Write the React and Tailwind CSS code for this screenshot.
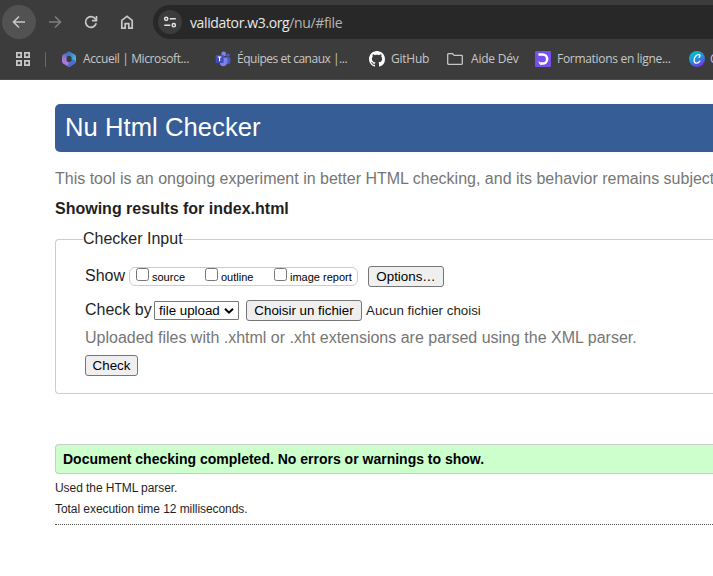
import React from "react";

const BackArrow = ({ className }) => (
  <svg width="16" height="16" viewBox="0 0 16 16" fill="none" stroke="currentColor" strokeWidth="1.6" className={className}>
    <path d="M14 8H3M8 2.5 2.5 8 8 13.5" />
  </svg>
);

const Reload = () => (
  <svg width="16" height="16" viewBox="0 0 16 16" fill="none" stroke="currentColor" strokeWidth="1.7">
    <path d="M13.2 9.3A5.4 5.4 0 1 1 12.3 4.7L13.5 6" />
    <path d="M13.5 2v4.6H9" />
  </svg>
);

const Home = () => (
  <svg width="16" height="16" viewBox="0 0 16 16" fill="none" stroke="currentColor" strokeWidth="1.7">
    <path d="M2.8 6.3 8 2.3l5.2 4v7.8H9.8V9.6H6.2v4.5H2.8z" />
  </svg>
);

const Tune = () => (
  <svg width="14" height="14" viewBox="0 0 14 14" fill="none" stroke="#e3e3e3" strokeWidth="1.5">
    <circle cx="3.2" cy="3.8" r="1.6" />
    <path d="M6.8 3.8h6M1.3 10.2h6" />
    <circle cx="10.8" cy="10.2" r="1.6" />
  </svg>
);

const Apps = () => (
  <svg width="14" height="14" viewBox="0 0 14 14" fill="none" stroke="#c7c7c7" strokeWidth="1.7" className="shrink-0">
    <path d="M.85.85h4.3v4.3H.85zM8.85.85h4.3v4.3h-4.3zM.85 8.85h4.3v4.3H.85zM8.85 8.85h4.3v4.3h-4.3z" />
  </svg>
);

const M365 = () => (
  <svg width="16" height="16" viewBox="0 0 16 16" className="shrink-0">
    <defs>
      <linearGradient id="m1" x1="0" y1="0" x2="0" y2="1">
        <stop offset="0" stopColor="#4a5fb4" />
        <stop offset="1" stopColor="#b884e6" />
      </linearGradient>
      <linearGradient id="m2" x1="0" y1="0" x2="1" y2="1">
        <stop offset="0" stopColor="#3f62b4" />
        <stop offset="1" stopColor="#42c4f0" />
      </linearGradient>
    </defs>
    <path d="M8 .3 2.2 3.4Q1 4 1 5.3v5.4l4.6-2.4V5.5z" fill="url(#m1)" />
    <path d="M8 .3 13.8 3.5Q15 4.2 15 5.4v5.1l-4.4-2.2V6L8 4.6 5.500 6V2z" fill="url(#m2)" />
    <path d="M1 10.600 5.600 8v2.200l2.500 1.400 2.500-1.400 4.400.2q0 1.200-1.100 1.900L9 15.400q-1 .6-2 0L2 12.500Q1 11.800 1 10.600z" fill="#a77bdc" />
    <path d="M10.6 8v2.200l-2.500 1.400-1.900 3.400q1.300.9 2.800.4l4.900-3.100q1.100-.7 1.100-1.900z" fill="#476fd0" />
  </svg>
);

const Teams = () => (
  <svg width="16" height="16" viewBox="0 0 16 16" className="shrink-0">
    <circle cx="13" cy="4.2" r="1.7" fill="#5059c9" />
    <path d="M11 6.5h4.4v4.2a2.4 2.4 0 0 1-4.4 1.2z" fill="#5059c9" />
    <circle cx="8.7" cy="3" r="2.4" fill="#7b83eb" />
    <path d="M5 6.5h7.3v4.6a4 4 0 0 1-7.3 2.3z" fill="#7b83eb" />
    <rect x=".6" y="3.9" width="8" height="8" rx=".7" fill="#454eb8" />
    <path d="M2.8 6h3.6M4.6 6v4.2" stroke="#fff" strokeWidth="1.1" />
  </svg>
);

const Github = () => (
  <svg width="16" height="16" viewBox="0 0 16 16" fill="#fff" className="shrink-0">
    <path d="M8 0C3.58 0 0 3.58 0 8c0 3.54 2.29 6.53 5.47 7.59.4.07.55-.17.55-.38 0-.19-.01-.82-.01-1.49-2.01.37-2.53-.49-2.69-.94-.09-.23-.48-.94-.82-1.13-.28-.15-.68-.52-.01-.53.63-.01 1.08.58 1.23.82.72 1.21 1.87.87 2.33.66.07-.52.28-.87.51-1.07-1.78-.2-3.64-.89-3.64-3.95 0-.87.31-1.59.82-2.15-.08-.2-.36-1.02.08-2.12 0 0 .67-.21 2.2.82.64-.18 1.32-.27 2-.27s1.36.09 2 .27c1.53-1.04 2.2-.82 2.2-.82.44 1.1.16 1.92.08 2.12.51.56.82 1.27.82 2.15 0 3.07-1.87 3.75-3.65 3.95.29.25.54.73.54 1.48 0 1.07-.01 1.93-.01 2.2 0 .21.15.46.55.38A8.01 8.01 0 0 0 16 8c0-4.42-3.58-8-8-8z" />
  </svg>
);

const Folder = () => (
  <svg width="16" height="12" viewBox="0 0 16 12" fill="none" stroke="#c7c7c7" strokeWidth="1.3" className="shrink-0">
    <path d="M.7 10.6V1.3Q.7.7 1.3.7h4.2l1.7 1.7h7.4q.7 0 .7.7v7.5q0 .7-.7.7H1.4q-.7 0-.7-.7z" />
  </svg>
);

const Formations = () => (
  <svg width="16" height="16" viewBox="0 0 16 16" className="shrink-0">
    <rect width="16" height="16" rx="1" fill="#7451eb" />
    <path d="M3.4 3.4h4.2a4.6 4.6 0 0 1 0 9.2H5.2" fill="none" stroke="#fff" strokeWidth="2.5" />
    <path d="M3.5 9.7 7 13.8H5.3Q3.5 13 3.5 9.7z" fill="#fff" />
  </svg>
);

const Canva = () => (
  <svg width="16" height="16" viewBox="0 0 16 16" className="shrink-0">
    <defs>
      <linearGradient id="cv" x1=".2" y1="0" x2=".7" y2="1">
        <stop offset="0" stopColor="#00c4cc" />
        <stop offset=".5" stopColor="#1f92dd" />
        <stop offset="1" stopColor="#7d2ae8" />
      </linearGradient>
    </defs>
    <circle cx="8" cy="8" r="8" fill="url(#cv)" />
    <path d="M10 6.3c1.4-.7 1.5-2.6-.1-2.7C7.4 3.5 5.2 6.3 5.1 9c-.1 3.7 3.5 4.3 5.8 1.1" fill="none" stroke="#fff" strokeWidth="1.3" strokeLinecap="round" />
  </svg>
);

const Bookmark = ({ icon, label, width, textClass }) => (
  <div className={`flex shrink-0 items-center ${width}`}>
    {icon}
    <span className={textClass}>{label}</span>
  </div>
);

const Check = ({ label, className }) => (
  <label className={`flex shrink-0 ${className}`}>
    <span className="h-[13px] w-[13px] shrink-0 rounded-[2.5px] border border-[#767676] bg-white" />
    <span className="ml-[3px] mt-[2px] text-[11px] leading-[14px] text-black">{label}</span>
  </label>
);

const Button = ({ children, className }) => (
  <button className={`flex h-[21px] shrink-0 items-center justify-center rounded-[3px] border border-[#767676] bg-[#efefef] text-[13.333px] leading-none text-black ${className}`}>
    {children}
  </button>
);

export default function App() {
  return (
    <div className="h-[576px] w-[713px] overflow-hidden whitespace-nowrap bg-white font-['Liberation_Sans',Arial,sans-serif] text-[#1f1f1f]">
      <header className="h-[80px] border-b border-[#4a4a4a] bg-[#3c3c3c] font-['Open_Sans',sans-serif] text-[#c7c7c7]">
        <div className="flex h-[44px] items-center pl-[2px]">
          <div className="flex h-[34px] w-[34px] items-center justify-center rounded-full bg-[#525252]">
            <BackArrow />
          </div>
          <div className="ml-[11px] text-[#7e7e7e]"><BackArrow className="rotate-180" /></div>
          <div className="ml-[20px]"><Reload /></div>
          <div className="ml-[20px]"><Home /></div>
          <div className="ml-[18px] flex h-[34px] flex-1 items-center rounded-l-full bg-[#282828] pl-[5px]">
            <div className="flex h-[24px] w-[24px] items-center justify-center rounded-full bg-[#3c3c3c]"><Tune /></div>
            <span className="ml-[8px] text-[14px] tracking-[-0.37px] text-[#e8e8e8]">
              validator.w3.org<span className="text-[#b5b5b5]">/nu/#file</span>
            </span>
          </div>
        </div>
        <nav className="flex h-[30px] items-center pl-[16px] text-[12px]">
          <Apps />
          <div className="ml-[15px] mr-[15px] h-[15px] w-px shrink-0 bg-[#686868]" />
          <Bookmark icon={<M365 />} label="Accueil | Microsoft..." width="w-[154px]" textClass="ml-[6px] tracking-[-0.39px]" />
          <Bookmark icon={<Teams />} label="Équipes et canaux |..." width="w-[154px]" textClass="ml-[6px] tracking-[-0.48px]" />
          <Bookmark icon={<Github />} label="GitHub" width="w-[78px]" textClass="ml-[6px] tracking-[-0.25px]" />
          <Bookmark icon={<Folder />} label="Aide Dév" width="w-[88px]" textClass="ml-[8px] tracking-[-0.2px]" />
          <Bookmark icon={<Formations />} label="Formations en ligne..." width="w-[154px]" textClass="ml-[6px] tracking-[-0.3px]" />
          <Bookmark icon={<Canva />} label="C" width="w-[24px]" textClass="ml-[5px]" />
        </nav>
      </header>

      <main className="pl-[55px] pt-[24px]">
        <h1 className="flex h-[48px] items-center rounded-l-[5px] bg-[#365d95] pb-[2px] pl-[10px] text-[25.6px] tracking-[0.05px] text-white">Nu Html Checker</h1>
        <p className="mt-[17px] h-[20px] text-[16px] leading-[20px] text-[#767676]">This tool is an ongoing experiment in better HTML checking, and its behavior remains subject</p>
        <h2 className="mt-[10px] h-[20px] text-[16px] font-bold leading-[20px]">Showing results for index.html</h2>

        <fieldset className="mt-[10px] h-[165px] rounded-l-[4px] border border-r-0 border-[#ccc] pl-[29px]">
          <legend className="-ml-[2px] h-[20px] pt-px text-[16px] leading-[18px]">Checker Input</legend>
          <div className="mt-[17px] flex h-[21px] items-center">
            <span className="w-[44px] pb-[2px] text-[16px]">Show</span>
            <div className="flex h-[19px] w-[229px] rounded-[6px] border border-[#ccc] pl-[6px]">
              <Check label="source" className="w-[69px]" />
              <Check label="outline" className="w-[69px]" />
              <Check label="image report" className="" />
            </div>
            <Button className="ml-[10px] w-[76px]">Options…</Button>
          </div>
          <div className="mt-[13px] flex h-[21px] items-center">
            <span className="w-[69px] pb-[2px] text-[16px]">Check by</span>
            <div className="flex h-[19px] w-[85px] items-center rounded-[1px] border border-[#767676] pl-[4px] text-[13.333px] text-black">
              file upload
              <svg width="10" height="8" viewBox="0 0 10 8" className="ml-[4px]" fill="none" stroke="#000" strokeWidth="2">
                <path d="M1 1.7 5 5.7 9 1.7" />
              </svg>
            </div>
            <Button className="ml-[7px] w-[116px]">Choisir un fichier</Button>
            <span className="ml-[4px] text-[13.333px]">Aucun fichier choisi</span>
          </div>
          <p className="mt-[7px] h-[20px] text-[16px] leading-[20px] text-[#767676]">Uploaded files with .xhtml or .xht extensions are parsed using the XML parser.</p>
          <Button className="mt-[7px] w-[53px]">Check</Button>
        </fieldset>

        <p className="mt-[50px] flex h-[30px] items-center rounded-l-[4px] border border-r-0 border-[#ccc] bg-[#cfc] pl-[7px] pt-px text-[14px] font-bold text-black">
          Document checking completed. No errors or warnings to show.
        </p>
        <p className="mt-[6px] h-[16px] text-[12px] leading-[16px] tracking-[-0.06px]">Used the HTML parser.</p>
        <p className="mt-[5px] h-[16px] text-[12px] leading-[16px] tracking-[-0.06px]">Total execution time 12 milliseconds.</p>
        <div className="mt-[7px] border-t border-dotted border-[#555]" />
      </main>
    </div>
  );
}
